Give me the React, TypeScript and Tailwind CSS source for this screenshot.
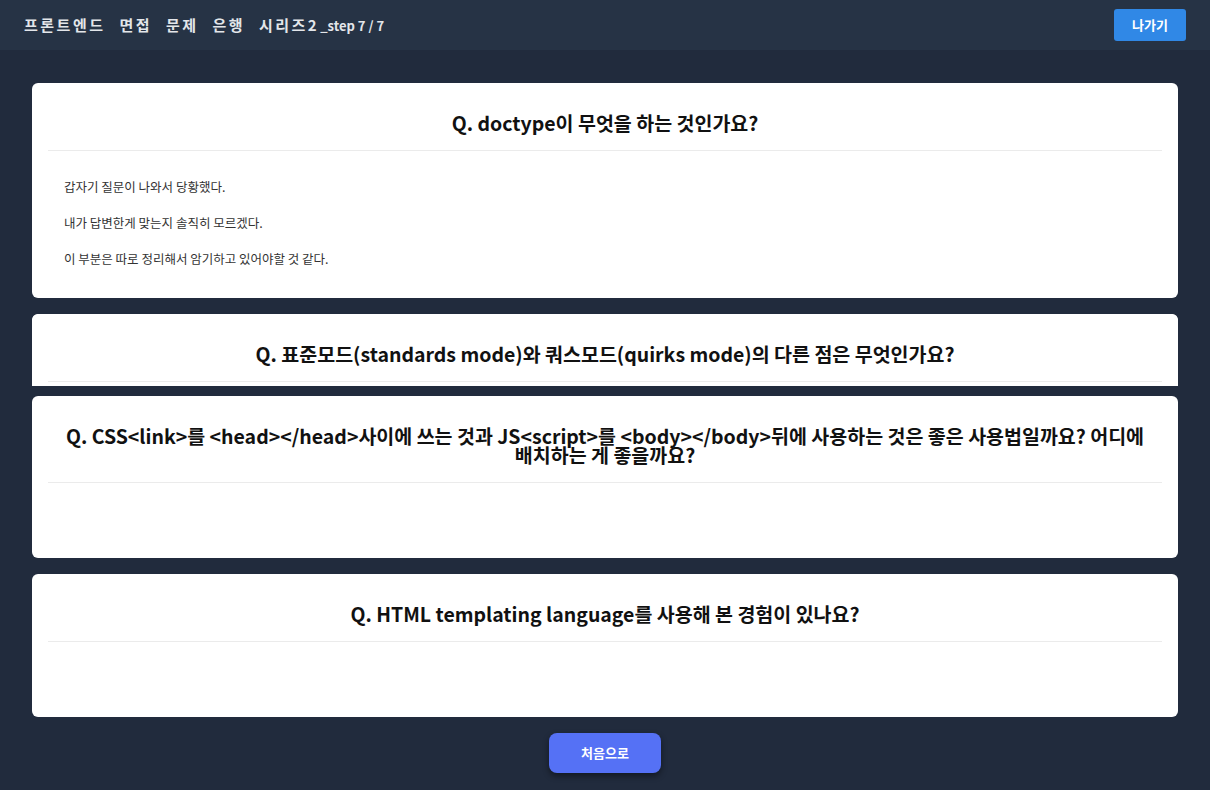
import React from "react";

const font = { fontFamily: '"Noto Sans CJK KR", "Noto Sans", sans-serif' };

function Card({ title, lines, clip }: { title: React.ReactNode; lines?: string[]; clip?: boolean }) {
  const inner = (
    <div className={`bg-white px-4 ${clip ? "rounded-t-md h-full" : "rounded-md pb-4"}`}>
      <div className="pt-[30px] pb-[18px] border-b border-[#ebebeb] text-center">
        <h2 className="text-[19.5px] leading-[19px] font-bold text-[#111] break-keep">{title}</h2>
      </div>
      {!clip && (
        <div className="px-4 pt-[26px] pb-[13px] text-[12.5px] leading-5 text-[#333]">
          {lines && lines.length > 0 ? (
            <div className="flex flex-col gap-4">
              {lines.map((l, i) => (
                <p key={i}>{l}</p>
              ))}
            </div>
          ) : (
            <div className="h-5" />
          )}
        </div>
      )}
    </div>
  );
  if (clip) {
    return <div className="h-[72px] overflow-hidden rounded-t-md bg-white">{inner}</div>;
  }
  return inner;
}

export default function App() {
  return (
    <div className="w-full min-h-[790px] bg-[#212b3d] flex flex-col" style={font}>
      <header className="h-[50px] bg-[#263345] flex items-center justify-between pl-6 pr-6">
        <div className="flex items-baseline text-[#e3e6ea]">
          <span className="text-[15px] font-bold tracking-[2.5px] [word-spacing:8px]">프론트엔드 면접 문제 은행 시리즈2</span>
          <span className="text-[13px] font-bold ml-[1px]">_step 7 / 7</span>
        </div>
        <button className="w-[72px] h-[32px] rounded-[3px] bg-[#3088e6] text-white text-[13px] font-bold">나가기</button>
      </header>
      <main className="flex flex-col px-8 pt-[33px]">
        <Card
          title="Q. doctype이 무엇을 하는 것인가요?"
          lines={[
            "갑자기 질문이 나와서 당황했다.",
            "내가 답변한게 맞는지 솔직히 모르겠다.",
            "이 부분은 따로 정리해서 암기하고 있어야할 것 같다.",
          ]}
        />
        <div className="h-4" />
        <Card clip title="Q. 표준모드(standards mode)와 쿼스모드(quirks mode)의 다른 점은 무엇인가요?" />
        <div className="h-[10px]" />
        <Card title="Q. CSS<link>를 <head></head>사이에 쓰는 것과 JS<script>를 <body></body>뒤에 사용하는 것은 좋은 사용법일까요? 어디에 배치하는 게 좋을까요?" />
        <div className="h-4" />
        <Card title="Q. HTML templating language를 사용해 본 경험이 있나요?" />
        <div className="flex justify-center pt-4">
          <button className="w-[112px] h-[40px] rounded-lg bg-[#5571f5] text-white text-[13px] font-bold shadow-[0_3px_6px_rgba(0,0,0,0.45)]">
            처음으로
          </button>
        </div>
      </main>
    </div>
  );
}
